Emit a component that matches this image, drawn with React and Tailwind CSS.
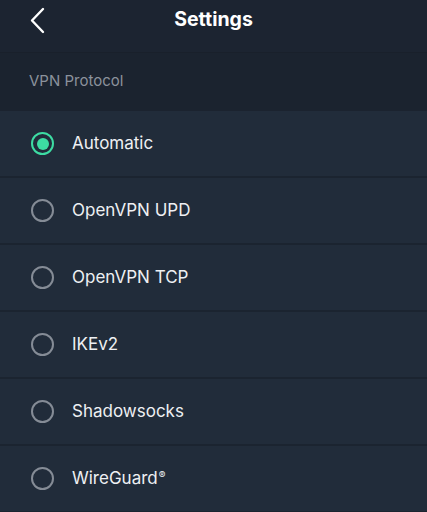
const protocols = ['Automatic', 'OpenVPN UPD', 'OpenVPN TCP', 'IKEv2', 'Shadowsocks', 'WireGuard'];

function Radio({ checked }) {
  if (checked) {
    return (
      <span className="flex h-[23px] w-[23px] items-center justify-center rounded-full border-[2.5px] border-[#3ddca3]">
        <span className="h-[12px] w-[12px] rounded-full bg-[#3ddca3]" />
      </span>
    );
  }
  return <span className="h-[23px] w-[23px] rounded-full border-2 border-[#858c96]" />;
}

export default function App() {
  return (
    <div className="h-[512px] w-[427px] overflow-hidden bg-[#1b232f] font-['Inter','Noto_Sans',sans-serif] text-white">
      <div className="relative flex h-[52px] items-center justify-center bg-[#1c2431]">
        <button type="button" className="absolute left-[28px] top-[7px]">
          <svg width="20" height="28" viewBox="0 0 20 28" fill="none" stroke="white" strokeWidth="2.4" strokeLinecap="round" strokeLinejoin="round">
            <path d="M15 2 L4 13.5 L15 25" />
          </svg>
        </button>
        <h1 className="-mt-[13px] text-[19.5px] font-bold">Settings</h1>
      </div>

      <div className="flex h-[59px] items-center border-t border-[#19202b] px-[29px] pb-[1px]">
        <span className="text-[15px] text-[#8b929c]">VPN Protocol</span>
      </div>

      <ul>
        {protocols.map((name, idx) => (
          <li key={name} className="flex h-[67px] items-center gap-[18px] border-b-2 border-[#1b2430] bg-[#212c3a] pl-[31px]">
            <Radio checked={idx === 0} />
            <span className="text-[17px] text-[#eef0f3]">
              {name}
              {name === 'WireGuard' && <sup className="ml-[1px] text-[10px]">®</sup>}
            </span>
          </li>
        ))}
      </ul>
    </div>
  );
}
